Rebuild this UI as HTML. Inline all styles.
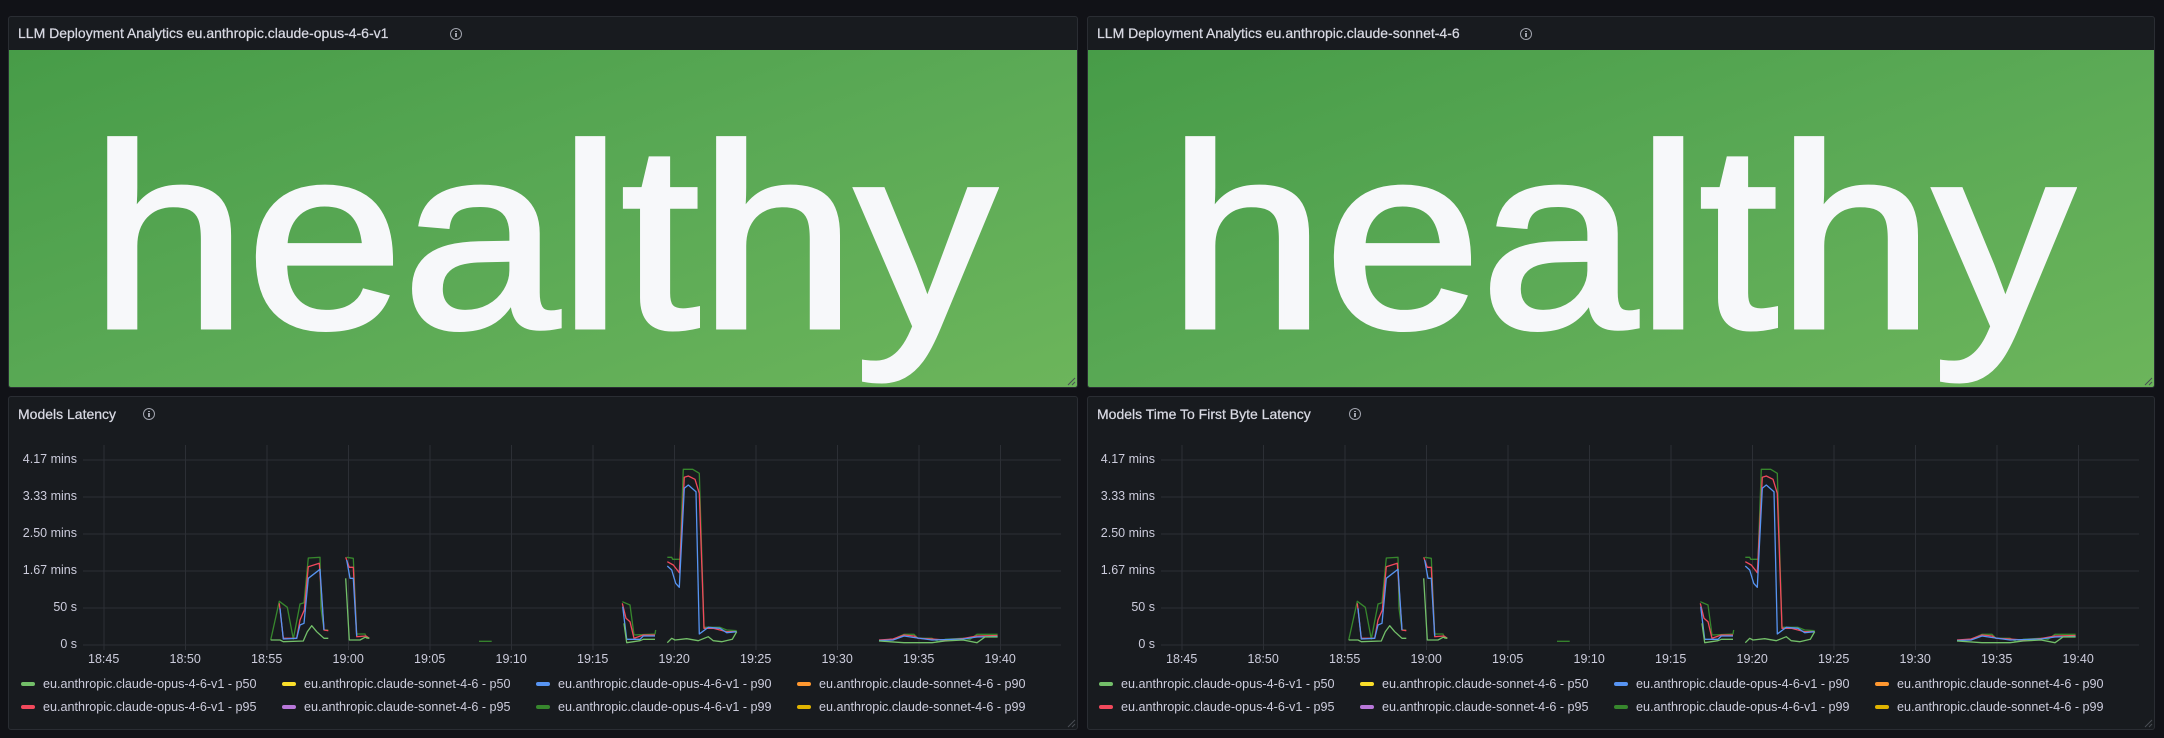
<!DOCTYPE html>
<html><head><meta charset="utf-8">
<style>
*{margin:0;padding:0;box-sizing:border-box}
body{width:2164px;height:738px;background:#111217;position:relative;overflow:hidden;font-family:"Liberation Sans",sans-serif;color:#ccccdc}
.panel{position:absolute;background:#181b1f;border:1px solid #2a2d33;border-radius:3px;overflow:hidden}
.title{position:absolute;left:9px;top:0;height:33px;line-height:33px;font-size:14px;font-weight:400;color:#d8d9e3;white-space:nowrap;-webkit-text-stroke:0.25px #d8d9e3}
.info{position:absolute;width:12px;height:12px;border:1.3px solid #a0a3ad;border-radius:50%}
.info:after{content:"";position:absolute;left:4.2px;top:4px;width:1.4px;height:4px;background:#a0a3ad}
.info:before{content:"";position:absolute;left:4.2px;top:1.6px;width:1.4px;height:1.4px;background:#a0a3ad}
.green{position:absolute;left:0;top:33px;right:0;bottom:0;background:linear-gradient(160deg,#479c48 0%,#5aa955 50%,#6cb55b 100%)}
.big{position:absolute;left:0;right:0;top:58px;text-align:center;font-size:260px;line-height:1;color:#f7f8fa;font-weight:400;-webkit-text-stroke:5px #f7f8fa}
.big span{display:inline-block;transform:scaleX(1.08)}
.lg{position:absolute;font-size:12.6px;color:#ccccdc;white-space:nowrap;line-height:14px}
.sw{position:absolute;width:14px;height:4px;border-radius:2px}
.ax{position:absolute;font-size:12.5px;color:#ccccdc;white-space:nowrap}
</style></head><body>

<div class="panel" style="left:8px;top:16px;width:1070px;height:372px">
 <div class="title">LLM Deployment Analytics eu.anthropic.claude-opus-4-6-v1</div>
 <div class="info" style="left:441px;top:11px"></div>
 <div class="green"><div class="big"><span>healthy</span></div></div>
</div>
<div class="panel" style="left:1087px;top:16px;width:1068px;height:372px">
 <div class="title">LLM Deployment Analytics eu.anthropic.claude-sonnet-4-6</div>
 <div class="info" style="left:432px;top:11px"></div>
 <div class="green"><div class="big"><span>healthy</span></div></div>
</div>

<div class="panel" style="left:8px;top:396px;width:1070px;height:334px">
 <div class="title" style="top:1px">Models Latency</div>
 <div class="info" style="left:134px;top:11px"></div>
</div>
<div class="panel" style="left:1087px;top:396px;width:1068px;height:334px">
 <div class="title" style="top:1px">Models Time To First Byte Latency</div>
 <div class="info" style="left:261px;top:11px"></div>
</div>

<svg width="2164" height="738" style="position:absolute;left:0;top:0" xmlns="http://www.w3.org/2000/svg">
<defs>
<g id="ch" fill="none" stroke-width="1.3" stroke-linejoin="round">
 <g stroke="#2c2f35" stroke-width="1">
  <line x1="83" y1="460" x2="1061" y2="460"/><line x1="83" y1="497" x2="1061" y2="497"/>
  <line x1="83" y1="534" x2="1061" y2="534"/><line x1="83" y1="571" x2="1061" y2="571"/>
  <line x1="83" y1="608" x2="1061" y2="608"/><line x1="83" y1="645" x2="1061" y2="645"/>
  <line x1="104" y1="445" x2="104" y2="650"/><line x1="185.5" y1="445" x2="185.5" y2="650"/>
  <line x1="267" y1="445" x2="267" y2="650"/><line x1="348.5" y1="445" x2="348.5" y2="650"/>
  <line x1="430" y1="445" x2="430" y2="650"/><line x1="511.5" y1="445" x2="511.5" y2="650"/>
  <line x1="593" y1="445" x2="593" y2="650"/><line x1="674.5" y1="445" x2="674.5" y2="650"/>
  <line x1="756" y1="445" x2="756" y2="650"/><line x1="837.5" y1="445" x2="837.5" y2="650"/>
  <line x1="919" y1="445" x2="919" y2="650"/><line x1="1000.5" y1="445" x2="1000.5" y2="650"/>
 </g>
 <g stroke="#37872d">
  <polyline points="270.7,640 279.3,601.3 287.3,607.3 293.3,639 300,604 304,602.7 308.3,558 320,557.3 321,608.3 324,630 328.3,630"/>
  <polyline points="346.7,557.3 353.3,558.3 356.7,634 365,634 366.7,638.3 369.3,638.3"/>
  <polyline points="479,641.3 491.7,641.3"/>
  <polyline points="622.3,601.7 630,605 634,635 655,634 655.7,630"/>
  <polyline points="667.3,557.3 671.7,557.3 672.7,559.3 680,559.3 683.3,469.3 692.7,469.3 699.3,473.3 704,627.3 720,627.3 726.7,630 736.7,630.7"/>
  <polyline points="879,641 893,639.3 904,634.3 914,634.3 918,638.3 932,638.3 938.5,641.7 945.5,639.3 963,638.3 970,639.3 977,634.3 997.6,634.3"/>
 </g>
 <g stroke="#f2495c">
  <polyline points="279.3,603.3 283.3,638.3 296.7,638.3 300,620 304.3,610 308.3,566.7 319.3,563.3 324,630 328.3,630.7"/>
  <polyline points="345.7,557.3 349.3,567.3 353.3,567.3 356.7,636.7 366,636 369.3,638.3"/>
  <polyline points="622.3,603.3 626,618.3 630,621.7 634,638.3 643.3,635 655,635"/>
  <polyline points="667.3,561.7 673.3,565 679.3,572.7 684.3,477.3 688.3,476 695,479.3 699.3,493.3 704,628.3 713.3,628.3 720,630 726.7,631.7 736.7,631.7"/>
  <polyline points="879,640 893,639 904,635 914,636 918,638.3 932,639 945,640 963,638.5 977,636 997.6,635.5"/>
 </g>
 <g stroke="#5794f2">
  <polyline points="280,608.3 283.3,639 296.7,638.3 300,625 304,623.3 308.3,578.3 320,569.3 324,630"/>
  <polyline points="346.7,560 350,578.3 353.3,578.3 356.7,636"/>
  <polyline points="622.7,606.7 626.7,639.3 640,639.3 643.3,636 655,636"/>
  <polyline points="667.3,566 671.7,570 675.7,583.3 679.3,587.3 684.3,488.3 688.3,485 696,491.7 699.3,634 708.3,627.3 720,628.3 726.7,632.7 736.7,631.7"/>
  <polyline points="879,640.5 893,640 904,636 914,637.5 932,640 963,639 977,637 997.6,636.5"/>
 </g>
 <g stroke="#73bf69">
  <polyline points="270.7,640 280,640 283.3,641.7 303.3,641 307.3,631.7 311.7,625.7 316.7,631.7 324,638.3 328.3,638.3"/>
  <polyline points="345.7,578.3 349.3,640 360,640 365,637.3 369.3,638.3"/>
  <polyline points="624,623.3 626.7,642.7 640,640.7 643.3,639.3 655,639.3"/>
  <polyline points="667.3,642.7 671.7,638.3 675,640 686.7,638.7 698.3,640.7 708.3,636.7 713.3,640.7 721.7,641.7 732.3,639.3 736.7,631.7"/>
  <polyline points="879,641 904,642.7 932,642.7 945,641 963,640 977,642.7 985,637 997.6,637"/>
 </g>
</g>
</defs>
<use href="#ch"/>
<use href="#ch" transform="translate(1078,0)"/>
<g stroke="#4a4d55" stroke-width="1">
 <line x1="1068" y1="385" x2="1075" y2="378"/><line x1="1072" y1="385" x2="1075" y2="382"/>
 <line x1="2145" y1="385" x2="2152" y2="378"/><line x1="2149" y1="385" x2="2152" y2="382"/>
 <line x1="1068" y1="727" x2="1075" y2="720"/><line x1="1072" y1="727" x2="1075" y2="724"/>
 <line x1="2145" y1="727" x2="2152" y2="720"/><line x1="2149" y1="727" x2="2152" y2="724"/>
</g>
</svg>

<div class="ax" style="right:2087px;top:452px">4.17 mins</div>
<div class="ax" style="right:2087px;top:489px">3.33 mins</div>
<div class="ax" style="right:2087px;top:526px">2.50 mins</div>
<div class="ax" style="right:2087px;top:563px">1.67 mins</div>
<div class="ax" style="right:2087px;top:600px">50 s</div>
<div class="ax" style="right:2087px;top:637px">0 s</div>
<div class="ax" style="right:1009px;top:452px">4.17 mins</div>
<div class="ax" style="right:1009px;top:489px">3.33 mins</div>
<div class="ax" style="right:1009px;top:526px">2.50 mins</div>
<div class="ax" style="right:1009px;top:563px">1.67 mins</div>
<div class="ax" style="right:1009px;top:600px">50 s</div>
<div class="ax" style="right:1009px;top:637px">0 s</div>

<div class="ax" style="left:88px;top:652px">18:45</div><div class="ax" style="left:169.5px;top:652px">18:50</div><div class="ax" style="left:251px;top:652px">18:55</div><div class="ax" style="left:332.5px;top:652px">19:00</div><div class="ax" style="left:414px;top:652px">19:05</div><div class="ax" style="left:495.5px;top:652px">19:10</div><div class="ax" style="left:577px;top:652px">19:15</div><div class="ax" style="left:658.5px;top:652px">19:20</div><div class="ax" style="left:740px;top:652px">19:25</div><div class="ax" style="left:821.5px;top:652px">19:30</div><div class="ax" style="left:903px;top:652px">19:35</div><div class="ax" style="left:984.5px;top:652px">19:40</div>
<div class="ax" style="left:1166px;top:652px">18:45</div><div class="ax" style="left:1247.5px;top:652px">18:50</div><div class="ax" style="left:1329px;top:652px">18:55</div><div class="ax" style="left:1410.5px;top:652px">19:00</div><div class="ax" style="left:1492px;top:652px">19:05</div><div class="ax" style="left:1573.5px;top:652px">19:10</div><div class="ax" style="left:1655px;top:652px">19:15</div><div class="ax" style="left:1736.5px;top:652px">19:20</div><div class="ax" style="left:1818px;top:652px">19:25</div><div class="ax" style="left:1899.5px;top:652px">19:30</div><div class="ax" style="left:1981px;top:652px">19:35</div><div class="ax" style="left:2062.5px;top:652px">19:40</div>

<div class="sw" style="left:21px;top:682px;background:#73bf69"></div><div class="lg" style="left:43px;top:677px">eu.anthropic.claude-opus-4-6-v1 - p50</div>
<div class="sw" style="left:282px;top:682px;background:#fade2a"></div><div class="lg" style="left:304px;top:677px">eu.anthropic.claude-sonnet-4-6 - p50</div>
<div class="sw" style="left:536px;top:682px;background:#5794f2"></div><div class="lg" style="left:558px;top:677px">eu.anthropic.claude-opus-4-6-v1 - p90</div>
<div class="sw" style="left:797px;top:682px;background:#ff9830"></div><div class="lg" style="left:819px;top:677px">eu.anthropic.claude-sonnet-4-6 - p90</div>
<div class="sw" style="left:21px;top:705px;background:#f2495c"></div><div class="lg" style="left:43px;top:700px">eu.anthropic.claude-opus-4-6-v1 - p95</div>
<div class="sw" style="left:282px;top:705px;background:#b877d9"></div><div class="lg" style="left:304px;top:700px">eu.anthropic.claude-sonnet-4-6 - p95</div>
<div class="sw" style="left:536px;top:705px;background:#37872d"></div><div class="lg" style="left:558px;top:700px">eu.anthropic.claude-opus-4-6-v1 - p99</div>
<div class="sw" style="left:797px;top:705px;background:#e0b400"></div><div class="lg" style="left:819px;top:700px">eu.anthropic.claude-sonnet-4-6 - p99</div>
<div class="sw" style="left:1099px;top:682px;background:#73bf69"></div><div class="lg" style="left:1121px;top:677px">eu.anthropic.claude-opus-4-6-v1 - p50</div>
<div class="sw" style="left:1360px;top:682px;background:#fade2a"></div><div class="lg" style="left:1382px;top:677px">eu.anthropic.claude-sonnet-4-6 - p50</div>
<div class="sw" style="left:1614px;top:682px;background:#5794f2"></div><div class="lg" style="left:1636px;top:677px">eu.anthropic.claude-opus-4-6-v1 - p90</div>
<div class="sw" style="left:1875px;top:682px;background:#ff9830"></div><div class="lg" style="left:1897px;top:677px">eu.anthropic.claude-sonnet-4-6 - p90</div>
<div class="sw" style="left:1099px;top:705px;background:#f2495c"></div><div class="lg" style="left:1121px;top:700px">eu.anthropic.claude-opus-4-6-v1 - p95</div>
<div class="sw" style="left:1360px;top:705px;background:#b877d9"></div><div class="lg" style="left:1382px;top:700px">eu.anthropic.claude-sonnet-4-6 - p95</div>
<div class="sw" style="left:1614px;top:705px;background:#37872d"></div><div class="lg" style="left:1636px;top:700px">eu.anthropic.claude-opus-4-6-v1 - p99</div>
<div class="sw" style="left:1875px;top:705px;background:#e0b400"></div><div class="lg" style="left:1897px;top:700px">eu.anthropic.claude-sonnet-4-6 - p99</div>
</body></html>
